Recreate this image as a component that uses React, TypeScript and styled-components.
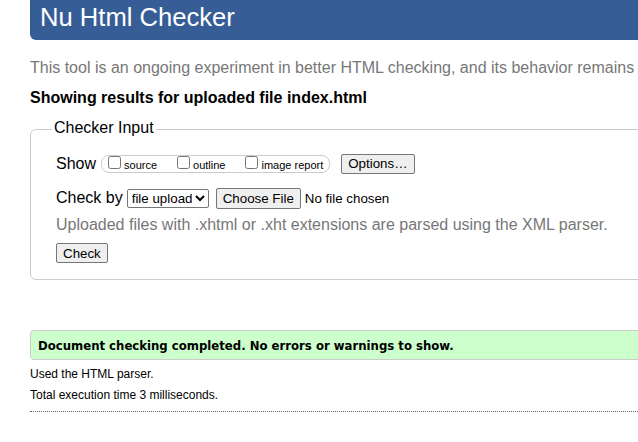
import React from "react";
import styled, { createGlobalStyle } from "styled-components";

const Global = createGlobalStyle`
  html, body { margin: 0; padding: 0; background: #fff; overflow: hidden; }
  body { font-family: "Liberation Sans", Arial, sans-serif; color: #000; }
`;

const Page = styled.div`
  width: 720px;
  padding-left: 30px;
`;

const Header = styled.header`
  height: 40px;
  box-sizing: border-box;
  padding: 1.5px 0 0 10px;
  background: #365d95;
  border-bottom-left-radius: 6px;
`;

const Title = styled.h1`
  margin: 0;
  font-size: 25.6px;
  line-height: 30px;
  font-weight: normal;
  color: #fff;
`;

const Intro = styled.p`
  margin: 18.7px 0 0;
  font-size: 16px;
  line-height: 18px;
  color: #777;
  white-space: nowrap;
`;

const Heading = styled.h2`
  margin: 12px 0 0;
  font-size: 16px;
  line-height: 18px;
  font-weight: bold;
  white-space: nowrap;
`;

const Fieldset = styled.fieldset`
  margin: 12.3px 0 0;
  padding: 14px 0 16px 25px;
  border: 1px solid #ccc;
  border-radius: 6px;
  min-width: 0;
`;

const Legend = styled.legend`
  margin-left: -4px;
  padding: 0 2px 3px;
  font-size: 16px;
  line-height: 18px;
`;

const Row = styled.div<{ $top?: number }>`
  display: flex;
  align-items: center;
  margin-top: ${(p) => p.$top ?? 0}px;
  white-space: nowrap;
`;

const RowLabel = styled.span<{ $space: number }>`
  font-size: 16px;
  line-height: 18px;
  margin-right: ${(p) => p.$space}px;
`;

const Group = styled.div`
  display: flex;
  align-items: center;
  gap: 16px;
  height: 18px;
  box-sizing: border-box;
  padding: 0 6px 0 2px;
  border: 1px solid #ccc;
  border-radius: 8px;
`;

const Choice = styled.label`
  display: flex;
  align-items: baseline;
  font-size: 11px;
  line-height: 12px;
`;

const Box = styled.input`
  width: 13px;
  height: 13px;
  margin: 0 3px 0 4px;
`;

const Button = styled.button<{ $left?: number }>`
  font-family: "Liberation Sans", Arial, sans-serif;
  font-size: 13.33px;
  margin-left: ${(p) => p.$left ?? 0}px;
  padding: 1px 6px;
  height: 20px;
  line-height: 15px;
  background: #efefef;
  border: 1px solid #767676;
  border-radius: 2px;
  color: #000;
`;

const Select = styled.select`
  font-family: "Liberation Sans", Arial, sans-serif;
  font-size: 13.33px;
  height: 19px;
  width: 82px;
  margin-right: 7px;
  border: 1px solid #767676;
  border-radius: 2px;
  background: #fff;
  color: #000;
`;

const File = styled.input`
  font-family: "Liberation Sans", Arial, sans-serif;
  font-size: 13.33px;
  &::file-selector-button {
    font-family: "Liberation Sans", Arial, sans-serif;
    font-size: 13.33px;
    height: 21px;
    padding: 1px 6px;
    margin-right: 4px;
    background: #efefef;
    border: 1px solid #767676;
    border-radius: 2px;
  }
`;

const Note = styled.p`
  margin: 7.5px 0 0;
  font-size: 16px;
  line-height: 18px;
  color: #777;
  white-space: nowrap;
`;

const Success = styled.div`
  margin-top: 50px;
  height: 30px;
  box-sizing: border-box;
  padding: 0 7px;
  display: flex;
  align-items: center;
  background: #ccffcc;
  border: 1px solid #ccc;
  border-radius: 4px;
  font-family: "DejaVu Sans Condensed", "DejaVu Sans", Verdana, sans-serif;
  font-stretch: condensed;
  font-weight: bold;
  font-size: 13px;
  white-space: nowrap;
`;

const Detail = styled.p`
  margin: 6.5px 0 0;
  font-size: 12px;
  line-height: 15px;
  & + & { margin-top: 6px; }
`;

const Rule = styled.div`
  margin-top: 8.5px;
  border-top: 1px dotted #666;
`;

export default function App() {
  return (
    <Page>
      <Global />
      <Header>
        <Title>Nu Html Checker</Title>
      </Header>
      <Intro>This tool is an ongoing experiment in better HTML checking, and its behavior remains</Intro>
      <Heading>Showing results for uploaded file index.html</Heading>
      <Fieldset>
        <Legend>Checker Input</Legend>
        <Row>
          <RowLabel $space={5}>Show</RowLabel>
          <Group>
            <Choice>
              <Box type="checkbox" />
              source
            </Choice>
            <Choice>
              <Box type="checkbox" />
              outline
            </Choice>
            <Choice>
              <Box type="checkbox" />
              image report
            </Choice>
          </Group>
          <Button $left={11}>Options…</Button>
        </Row>
        <Row $top={14}>
          <RowLabel $space={4}>Check by</RowLabel>
          <Select defaultValue="file">
            <option value="file">file upload</option>
            <option value="address">address</option>
            <option value="text">text input</option>
          </Select>
          <File type="file" />
        </Row>
        <Note>Uploaded files with .xhtml or .xht extensions are parsed using the XML parser.</Note>
        <Row $top={9}>
          <Button>Check</Button>
        </Row>
      </Fieldset>
      <Success>Document checking completed. No errors or warnings to show.</Success>
      <Detail>Used the HTML parser.</Detail>
      <Detail>Total execution time 3 milliseconds.</Detail>
      <Rule />
    </Page>
  );
}
